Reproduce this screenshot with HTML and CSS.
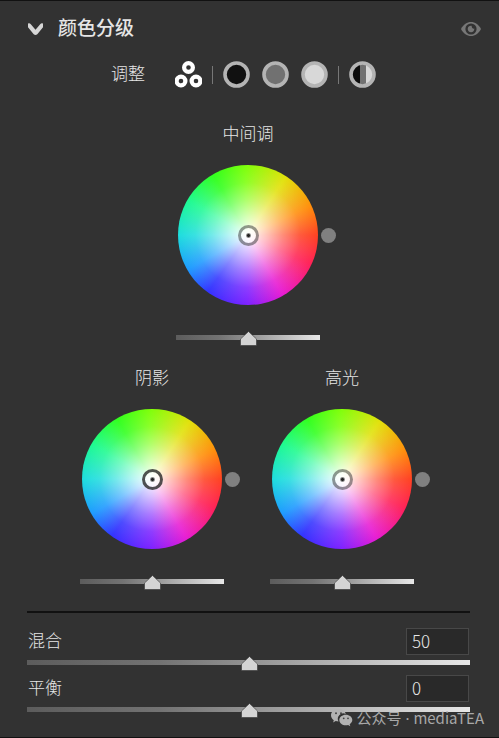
FILE: index.html
```html
<!DOCTYPE html>
<html lang="zh-CN">
<head>
<meta charset="utf-8">
<meta name="viewport" content="width=device-width, initial-scale=1">
<title>颜色分级</title>
<link rel="stylesheet" href="styles.css">
</head>
<body>
<main class="panel">
  <header class="header">
    <button class="icon-button" type="button" aria-label="折叠">
      <svg width="17" height="13" viewBox="0 0 17 13"><path d="M1 0.800C1.800 0 3 0.300 3.800 1.300L8.500 6.800L13.200 1.300C14 0.300 15.200 0 16 0.800V4.300L10.300 11.200Q8.500 12.800 6.700 11.200L1 4.300Z" fill="#d6d6d6"/></svg>
    </button>
    <h1 class="title">颜色分级</h1>
    <button class="icon-button" type="button" aria-label="显示效果">
      <svg width="20" height="14" viewBox="0 0 20 14"><path d="M0 7C2.500 2.200 6 0 10 0S17.500 2.200 20 7C17.500 11.800 14 14 10 14S2.500 11.800 0 7Z" fill="#777"/><circle cx="10" cy="7" r="5.600" fill="#323232"/><path d="M10.600 3.700A3.300 3.300 0 1 0 13.300 6.600Q10.900 7 10.600 3.700Z" fill="#777"/></svg>
    </button>
  </header>

  <div class="modes">
    <span class="modes-label">调整</span>
    <div class="mode-group">
      <button class="icon-button" type="button" aria-label="三向">
        <svg width="27" height="27" viewBox="0 0 27 27"><g fill="#323232" stroke="#fff" stroke-width="4.200"><circle cx="13.500" cy="6.500" r="4.400"/><circle cx="6" cy="20" r="4.400"/><circle cx="21" cy="20" r="4.400"/></g></svg>
      </button>
    </div>
    <span class="separator"></span>
    <div class="mode-group">
      <button class="icon-button" type="button" aria-label="阴影">
        <svg width="27" height="27" viewBox="0 0 27 27"><circle cx="13.500" cy="13.500" r="11.500" fill="#111" stroke="#b4b4b4" stroke-width="3.600"/></svg>
      </button>
      <button class="icon-button" type="button" aria-label="中间调">
        <svg width="27" height="27" viewBox="0 0 27 27"><circle cx="13.500" cy="13.500" r="11.500" fill="#717171" stroke="#b4b4b4" stroke-width="3.600"/></svg>
      </button>
      <button class="icon-button" type="button" aria-label="高光">
        <svg width="27" height="27" viewBox="0 0 27 27"><circle cx="13.500" cy="13.500" r="11.500" fill="#d8d8d8" stroke="#b4b4b4" stroke-width="3.600"/></svg>
      </button>
    </div>
    <span class="separator"></span>
    <div class="mode-group">
      <button class="icon-button" type="button" aria-label="全局">
        <svg width="27" height="27" viewBox="0 0 27 27"><circle cx="13.500" cy="13.500" r="11" fill="#717171"/><path d="M11 3V24A11 11 0 0 1 11 3Z" fill="#0c0c0c"/><path d="M17 3V24A11 11 0 0 0 17 3Z" fill="#d8d8d8"/><circle cx="13.500" cy="13.500" r="11.500" fill="none" stroke="#b4b4b4" stroke-width="3.600"/></svg>
      </button>
    </div>
  </div>

  <div class="wheels">
    <section class="grade">
      <label class="grade-label" for="mid">中间调</label>
      <div class="wheel">
        <button class="picker" type="button" aria-label="中间调颜色"></button>
        <button class="swatch" type="button" aria-label="中间调色相"></button>
      </div>
      <input class="slider" id="mid" type="range" min="0" max="100" value="50">
    </section>
    <div class="pair">
      <section class="grade">
        <label class="grade-label" for="shadow">阴影</label>
        <div class="wheel">
          <button class="picker picker-active" type="button" aria-label="阴影颜色"></button>
          <button class="swatch" type="button" aria-label="阴影色相"></button>
        </div>
        <input class="slider" id="shadow" type="range" min="0" max="100" value="50">
      </section>
      <section class="grade">
        <label class="grade-label" for="light">高光</label>
        <div class="wheel">
          <button class="picker" type="button" aria-label="高光颜色"></button>
          <button class="swatch" type="button" aria-label="高光色相"></button>
        </div>
        <input class="slider" id="light" type="range" min="0" max="100" value="50">
      </section>
    </div>
  </div>

  <div class="settings">
    <div class="setting">
      <div class="setting-row">
        <label for="blend">混合</label>
        <input class="value" id="blend" type="text" value="50">
      </div>
      <input class="slider" type="range" min="0" max="100" value="50" aria-label="混合">
    </div>
    <div class="setting">
      <div class="setting-row">
        <label for="balance">平衡</label>
        <input class="value" id="balance" type="text" value="0">
      </div>
      <input class="slider" type="range" min="-100" max="100" value="0" aria-label="平衡">
    </div>
  </div>

  <div class="credit">
    <svg width="22" height="18" viewBox="0 0 22 18"><path d="M7.500 0C3.300 0 0 2.800 0 6.300C0 8.300 1.100 10 2.800 11.200L2.100 13.400L4.700 12.100Q6 12.500 7.500 12.500A5.500 5.500 0 0 1 14.800 5C14.200 2.100 11.200 0 7.500 0Z" fill="#b2b2b2"/><path d="M14.800 5.700C11.200 5.700 8.300 8 8.300 11S11.200 16.300 14.800 16.300Q16 16.300 17.100 16L19.300 17.200L18.700 15.200C20.300 14.200 21.300 12.700 21.300 11C21.300 8 18.400 5.700 14.800 5.700Z" fill="#b2b2b2"/><g fill="#444"><circle cx="5" cy="4.300" r="1"/><circle cx="10" cy="4.300" r="1"/><circle cx="12.700" cy="9.300" r="0.900"/><circle cx="17" cy="9.300" r="0.900"/></g></svg>
    <span>公众号<span class="credit-dot"> · </span>mediaTEA</span>
  </div>
</main>
</body>
</html>
```
FILE: styles.css
```css
* {
  box-sizing: border-box;
}

body {
  margin: 0;
  background: #323232;
  color: #e6e6e6;
  font-family: "Noto Sans CJK SC", sans-serif;
  font-size: 17px;
  font-weight: 300;
  line-height: 24px;
}

button,
input {
  margin: 0;
  padding: 0;
  border: 0;
  font: inherit;
  color: inherit;
}

svg {
  display: block;
}

.panel {
  position: relative;
  min-height: 100vh;
  border-top: 1px solid #111;
  border-bottom: 1px solid #111;
}

.header {
  display: flex;
  align-items: center;
  padding: 14px 18px 0 27px;
}

.icon-button {
  flex: none;
  background: none;
}

.title {
  flex: 1;
  margin: 0 0 0 14px;
  padding-bottom: 4px;
  font-size: 19px;
  font-weight: 500;
  line-height: 24px;
}

.modes {
  display: flex;
  align-items: center;
  justify-content: center;
  gap: 10px;
  margin-top: 18px;
  padding-right: 12px;
}

.modes-label {
  margin-right: 20px;
  padding-bottom: 3px;
}

.mode-group {
  display: flex;
  gap: 12px;
}

.separator {
  width: 1px;
  height: 18px;
  background: #777;
}

.wheels {
  display: flex;
  flex-direction: column;
  align-items: center;
  gap: 20px;
  margin-top: 33px;
  padding-right: 3px;
}

.pair {
  display: flex;
  gap: 46px;
  padding-right: 2px;
}

.grade {
  display: flex;
  flex-direction: column;
  align-items: center;
  width: 144px;
}

.wheel {
  position: relative;
  display: grid;
  place-items: center;
  width: 140px;
  height: 140px;
  margin: 20px 0 25px;
  border-radius: 50%;
  background:
    radial-gradient(closest-side, #fff, rgba(255, 255, 255, 0.72) 25%, rgba(255, 255, 255, 0.42) 50%, rgba(255, 255, 255, 0.16) 75%, rgba(255, 255, 255, 0.04)),
    conic-gradient(from 90deg, #ff3a18, #ff1850 25deg, #e612d2 60deg, #7a18ff 90deg, #2a2aff 125deg, #1496ff 150deg, #14dcdc 180deg, #14fa8c 210deg, #28ff14 240deg, #78ff00 268deg, #e0e000 303deg, #ff8a00 335deg, #ff3a18);
}

.picker {
  width: 21px;
  height: 21px;
  border: 3px solid rgba(50, 50, 50, 0.5);
  border-radius: 50%;
  background: radial-gradient(circle, #222 1px, rgba(255, 255, 255, 0.6) 3px);
  background-clip: padding-box;
}

.picker-active {
  border-color: rgba(40, 40, 40, 0.8);
}

.swatch {
  position: absolute;
  left: 143px;
  width: 15px;
  height: 15px;
  border-radius: 50%;
  background: #808080;
}

.slider {
  display: block;
  width: 100%;
  height: 15px;
  appearance: none;
  background: none;
}

.slider::-webkit-slider-runnable-track {
  height: 5px;
  background: linear-gradient(to right, #5c5c5c, #737373 30%, #929292 50%, #e8e8e8);
}

.slider::-webkit-slider-thumb {
  appearance: none;
  width: 18px;
  height: 16px;
  margin-top: -4px;
  background: url("data:image/svg+xml,%3Csvg xmlns='http://www.w3.org/2000/svg' width='18' height='16'%3E%3Cpath d='M9.500 0.500L17.500 8V14.500H1.500V8Z' fill='%23d4d4d4' stroke='%23333' stroke-opacity='.6'/%3E%3C/svg%3E") no-repeat;
}

.settings {
  display: flex;
  flex-direction: column;
  gap: 5px;
  margin: 22px 29px 0 27px;
  padding-top: 15px;
  border-top: 2px solid #111;
}

.setting-row {
  display: flex;
  align-items: center;
  justify-content: space-between;
  padding: 0 1px;
}

.setting-row label {
  padding-bottom: 3px;
}

.value {
  width: 63px;
  height: 27px;
  padding: 0 5px 2px;
  border: 1px solid #484848;
  background: #292929;
}

.credit {
  position: absolute;
  right: 15px;
  bottom: 7px;
  display: flex;
  align-items: center;
  gap: 4px;
  color: #a8a8a8;
  font-size: 15px;
  font-weight: 400;
}

.credit-dot {
  font-family: "Noto Sans", sans-serif;
}
```
